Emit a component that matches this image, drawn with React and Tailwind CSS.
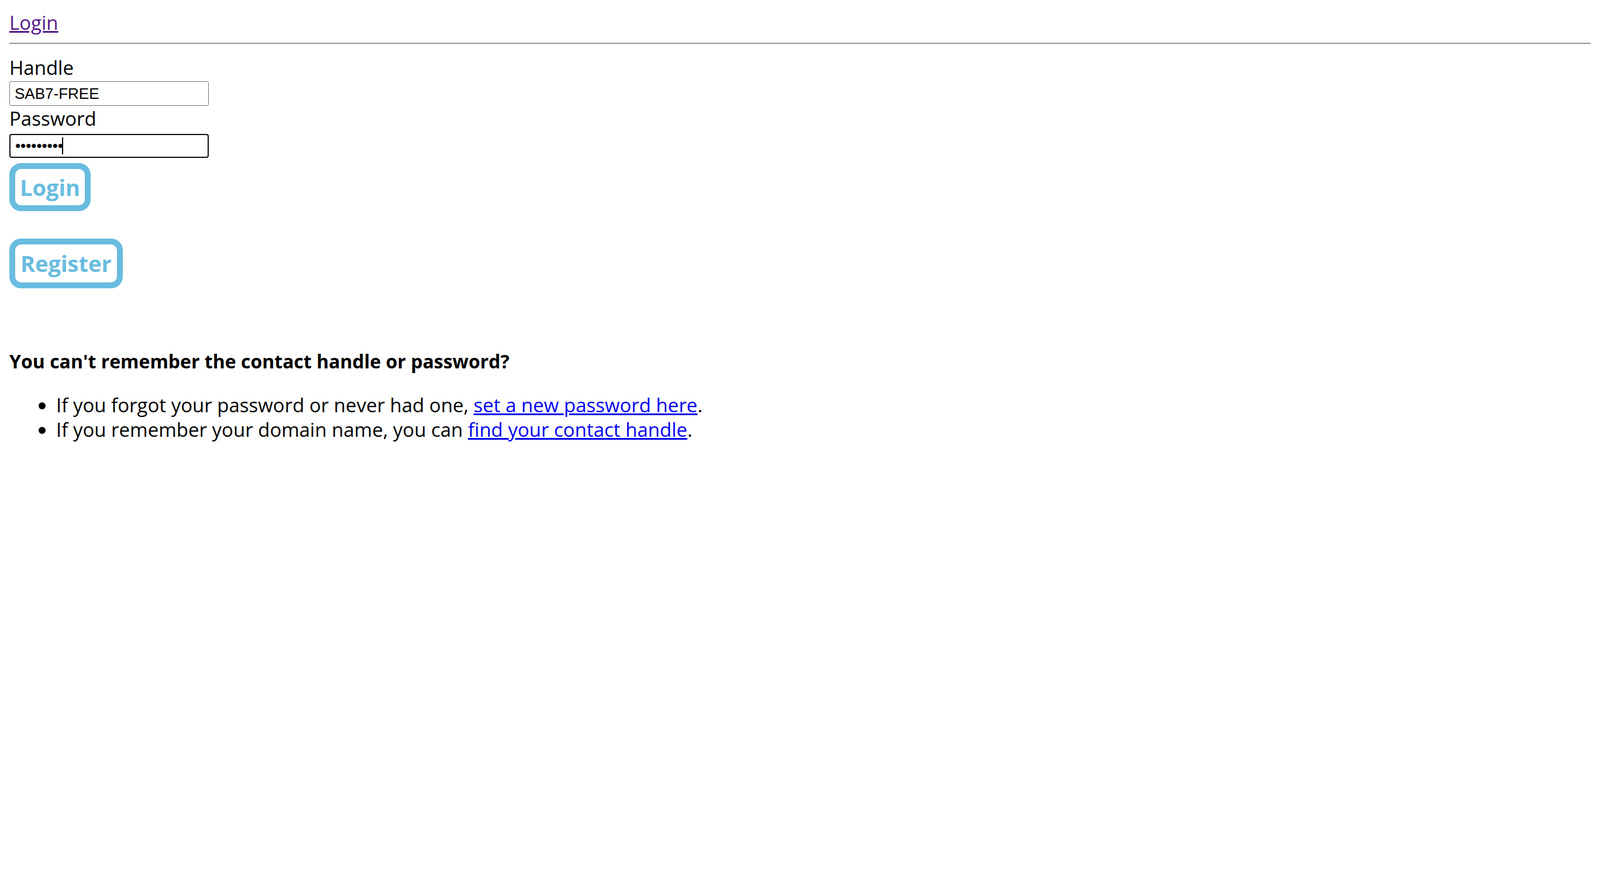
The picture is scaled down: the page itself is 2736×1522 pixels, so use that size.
import React from 'react';

const LoginPage = () => {
  return (
    <div className="p-4 bg-white min-h-screen text-black" style={{ fontFamily: '"Open Sans", "Noto Sans", sans-serif' }}>
      <div>
        <a href="#" className="text-[33px] leading-[45px] text-[#551a8b] underline">Login</a>
      </div>
      <hr className="mt-[12px] border-0 border-t-2 border-t-[#9a9a9a] border-b border-b-[#ececec]" />

      <form onSubmit={(e) => e.preventDefault()}>
        <label className="block mt-[17px] mb-[1px] text-[33px] leading-[45px]">Handle</label>
        <input
          type="text"
          defaultValue="SAB7-FREE"
          className="block w-[341px] h-[42px] px-[8px] border border-[#767676] rounded-[3px] text-[26px] outline-none"
          style={{ fontFamily: '"Liberation Sans", Arial, sans-serif' }}
        />

        <label className="block -mt-[1px] mb-[4px] text-[33px] leading-[45px]">Password</label>
        <div className="relative w-[341px]">
          <input
            type="password"
            defaultValue="secretpwd"
            className="block w-[341px] h-[41px] px-[8px] border-2 border-[#101010] rounded-[4px] text-[26px] outline-none"
            style={{ fontFamily: '"Liberation Sans", Arial, sans-serif' }}
          />
          {/* fake caret of the focused field */}
          <span className="absolute left-[90px] top-[6px] w-[2px] h-[29px] bg-black" />
        </div>

        <button
          type="submit"
          className="block mt-[9px] px-[8px] border-[10px] border-[#69bcdf] rounded-[20px] bg-white text-[#69bcdf] font-bold text-[38px] leading-[62px]"
        >
          Login
        </button>
      </form>

      <button
        type="button"
        className="block mt-[47px] px-[9px] border-[10px] border-[#69bcdf] rounded-[20px] bg-white text-[#69bcdf] font-bold text-[38px] leading-[65px]"
      >
        Register
      </button>

      <h3 className="mt-[104px] font-bold text-[32px] leading-[41px]">
        You can't remember the contact handle or password?
      </h3>
      <ul className="mt-[34px] pl-[80px] list-disc text-[33px] leading-[42px]">
        <li>
          If you forgot your password or never had one,{' '}
          <a href="#" className="text-[#0000ee] underline">set a new password here</a>.
        </li>
        <li>
          If you remember your domain name, you can{' '}
          <a href="#" className="text-[#0000ee] underline">find your contact handle</a>.
        </li>
      </ul>
    </div>
  );
};

export default function App() {
  return <LoginPage />;
}
